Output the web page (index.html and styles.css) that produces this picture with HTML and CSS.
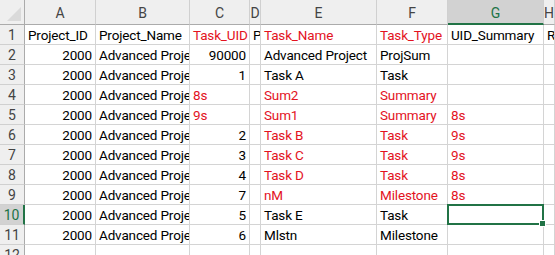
FILE: index.html
```html
<!DOCTYPE html>
<html>
<head>
<meta charset="utf-8">
<link rel="stylesheet" href="styles.css">
</head>
<body>
<div class="sheet">
  <div class="hd corner"><span class="tri"></span></div>
  <div class="hd col">A</div>
  <div class="hd col">B</div>
  <div class="hd col">C</div>
  <div class="hd col">D</div>
  <div class="hd col">E</div>
  <div class="hd col">F</div>
  <div class="hd col sel">G</div>
  <div class="hd col">H</div>

  <div class="hd row">1</div>
  <div class="c">Project_ID</div>
  <div class="c">Project_Name</div>
  <div class="c red">Task_UID</div>
  <div class="c">Parent</div>
  <div class="c red">Task_Name</div>
  <div class="c red">Task_Type</div>
  <div class="c">UID_Summary</div>
  <div class="c">Resource_Names</div>

  <div class="hd row">2</div>
  <div class="c num">2000</div>
  <div class="c">Advanced Project</div>
  <div class="c num">90000</div>
  <div class="c"></div>
  <div class="c">Advanced Project</div>
  <div class="c">ProjSum</div>
  <div class="c"></div>
  <div class="c"></div>

  <div class="hd row">3</div>
  <div class="c num">2000</div>
  <div class="c">Advanced Project</div>
  <div class="c num">1</div>
  <div class="c"></div>
  <div class="c">Task A</div>
  <div class="c">Task</div>
  <div class="c"></div>
  <div class="c"></div>

  <div class="hd row">4</div>
  <div class="c num">2000</div>
  <div class="c">Advanced Project</div>
  <div class="c red">8s</div>
  <div class="c"></div>
  <div class="c red">Sum2</div>
  <div class="c red">Summary</div>
  <div class="c"></div>
  <div class="c"></div>

  <div class="hd row">5</div>
  <div class="c num">2000</div>
  <div class="c">Advanced Project</div>
  <div class="c red">9s</div>
  <div class="c"></div>
  <div class="c red">Sum1</div>
  <div class="c red">Summary</div>
  <div class="c red">8s</div>
  <div class="c"></div>

  <div class="hd row">6</div>
  <div class="c num">2000</div>
  <div class="c">Advanced Project</div>
  <div class="c num">2</div>
  <div class="c"></div>
  <div class="c red">Task B</div>
  <div class="c red">Task</div>
  <div class="c red">9s</div>
  <div class="c"></div>

  <div class="hd row">7</div>
  <div class="c num">2000</div>
  <div class="c">Advanced Project</div>
  <div class="c num">3</div>
  <div class="c"></div>
  <div class="c red">Task C</div>
  <div class="c red">Task</div>
  <div class="c red">9s</div>
  <div class="c"></div>

  <div class="hd row">8</div>
  <div class="c num">2000</div>
  <div class="c">Advanced Project</div>
  <div class="c num">4</div>
  <div class="c"></div>
  <div class="c red">Task D</div>
  <div class="c red">Task</div>
  <div class="c red">8s</div>
  <div class="c"></div>

  <div class="hd row">9</div>
  <div class="c num">2000</div>
  <div class="c">Advanced Project</div>
  <div class="c num">7</div>
  <div class="c"></div>
  <div class="c red">nM</div>
  <div class="c red">Milestone</div>
  <div class="c red">8s</div>
  <div class="c"></div>

  <div class="hd row sel">10</div>
  <div class="c num">2000</div>
  <div class="c">Advanced Project</div>
  <div class="c num">5</div>
  <div class="c"></div>
  <div class="c">Task E</div>
  <div class="c">Task</div>
  <div class="c active"><span class="box"><span class="handle"></span></span></div>
  <div class="c"></div>

  <div class="hd row">11</div>
  <div class="c num">2000</div>
  <div class="c">Advanced Project</div>
  <div class="c num">6</div>
  <div class="c"></div>
  <div class="c">Mlstn</div>
  <div class="c">Milestone</div>
  <div class="c"></div>
  <div class="c"></div>

  <div class="hd row">12</div>
  <div class="c"></div>
  <div class="c"></div>
  <div class="c"></div>
  <div class="c"></div>
  <div class="c"></div>
  <div class="c"></div>
  <div class="c"></div>
  <div class="c"></div>
</div>
</body>
</html>
```
FILE: styles.css
```css
html, body {
  margin: 0;
  padding: 0;
  background: #ffffff;
  overflow: hidden;
}
.sheet {
  display: grid;
  grid-template-columns: 25px 71px 94px 60px 11px 116px 71px 96px 11px;
  grid-template-rows: 25px repeat(12, 20px);
  font-family: Roboto, "Liberation Sans", Arial, sans-serif;
  font-size: 13.5px;
  letter-spacing: -0.15px;
  color: #000;
  width: 555px;
  overflow: hidden;
}
.hd {
  background: #efefef;
  color: #444;
  box-sizing: border-box;
  border-right: 1px solid #d0d0d0;
  border-bottom: 1px solid #d0d0d0;
  display: flex;
  align-items: center;
  justify-content: center;
  font-size: 14px;
  letter-spacing: 0;
}
.hd.col {
  border-bottom: 1px solid #ababab;
  padding-top: 2px;
}
.hd.row {
  border-right: 1px solid #ababab;
  padding-top: 1px;
}
.hd.col.sel {
  background: #d2d2d2;
  color: #217346;
  border-bottom: 2px solid #217346;
}
.hd.row.sel {
  background: #d2d2d2;
  color: #217346;
  border-right: 2px solid #217346;
}
.corner {
  position: relative;
  border-bottom: 1px solid #ababab;
  border-right: 1px solid #ababab;
}
.tri {
  position: absolute;
  right: 3px;
  bottom: 3px;
  width: 0;
  height: 0;
  border-left: 14px solid transparent;
  border-bottom: 14px solid #dadada;
}
.c {
  box-sizing: border-box;
  border-right: 1px solid #d4d4d4;
  border-bottom: 1px solid #d4d4d4;
  padding: 1px 0 0 3px;
  line-height: 19px;
  white-space: nowrap;
  overflow: hidden;
}
.num {
  text-align: right;
  padding-right: 3px;
}
.red {
  color: #e3121e;
}
.active {
  position: relative;
  overflow: visible;
}
.box {
  position: absolute;
  left: -1px;
  top: -1px;
  right: -1px;
  bottom: -1px;
  border: 2px solid #217346;
  z-index: 2;
}
.handle {
  position: absolute;
  right: -4px;
  bottom: -4px;
  width: 5px;
  height: 5px;
  background: #217346;
  border: 1px solid #fff;
}
```
